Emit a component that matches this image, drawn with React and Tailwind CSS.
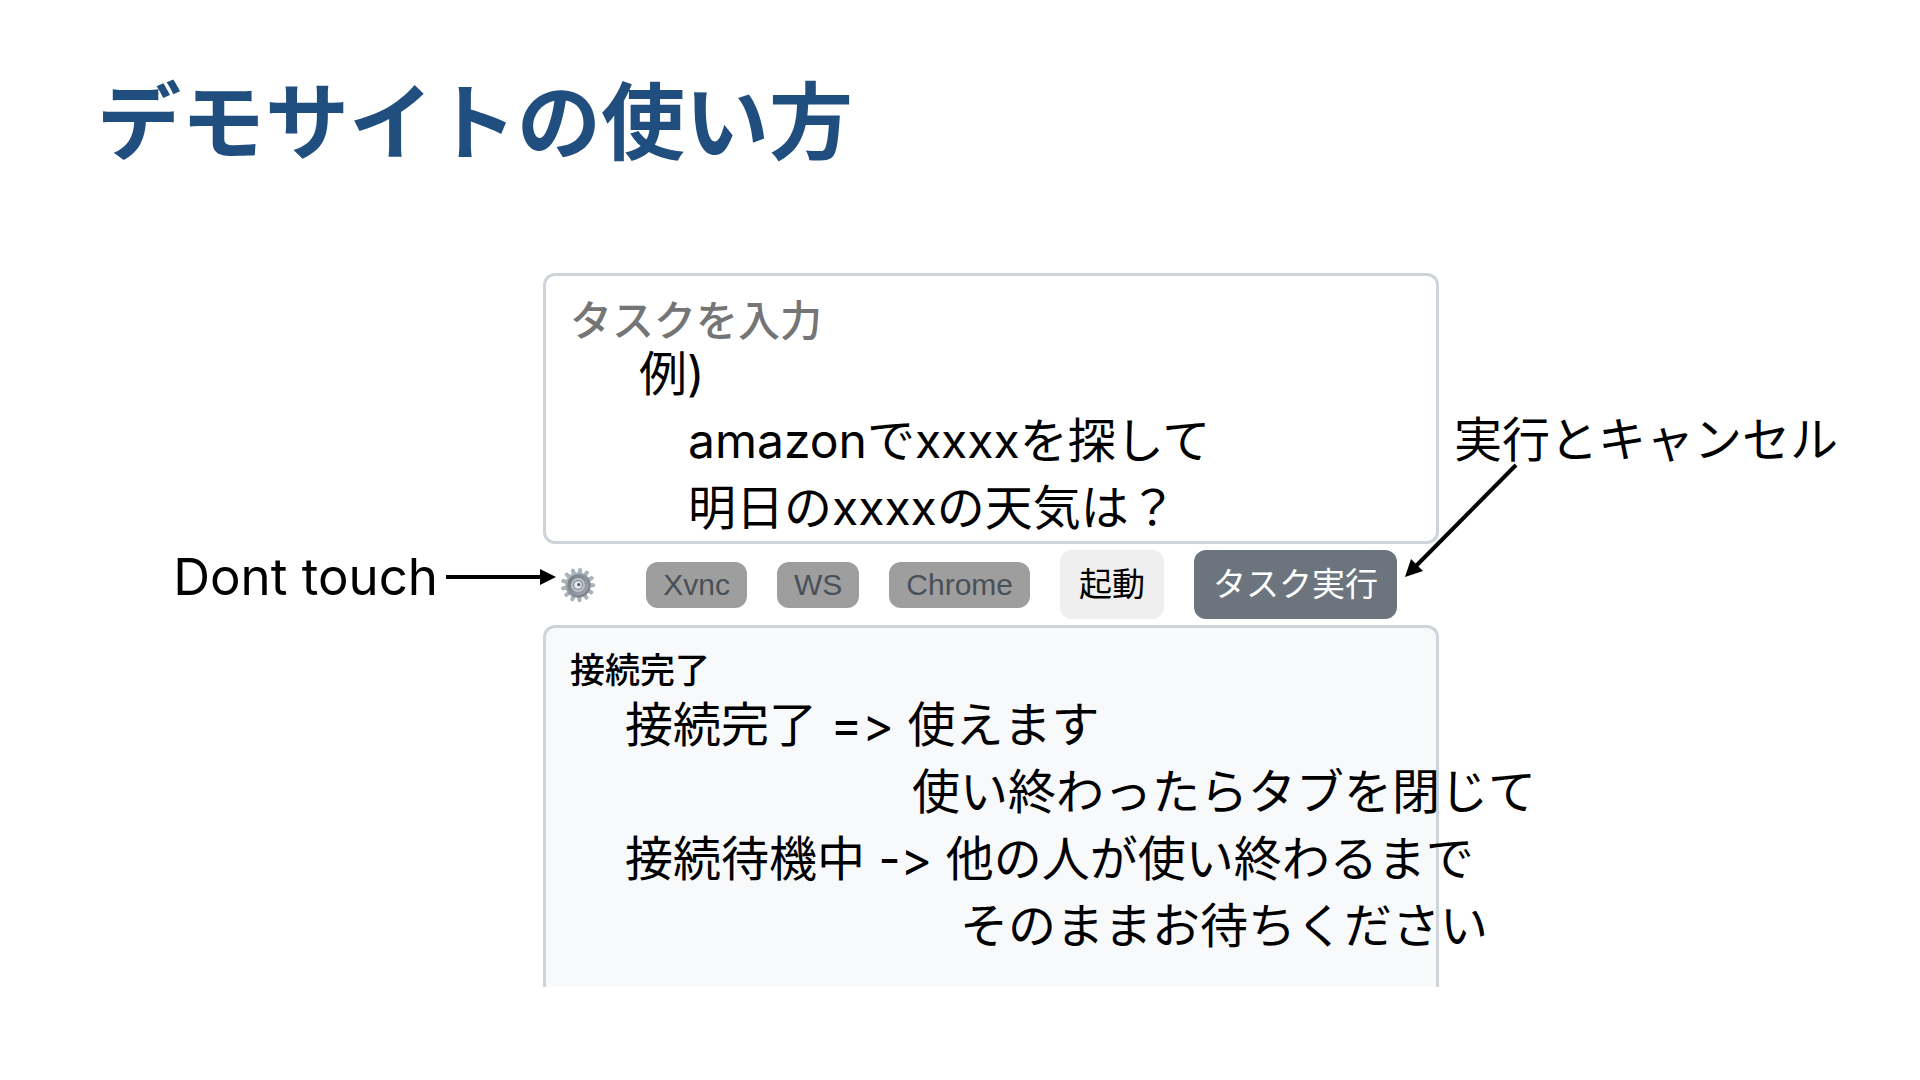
const noteBase =
  "font-['Inter','Noto_Sans_CJK_JP',sans-serif] [font-feature-settings:'calt'_0] leading-[67px] whitespace-nowrap text-black";
const note = `${noteBase} text-[48px]`;

const TEETH = Array.from({ length: 13 }, (_, i) => (i * 360) / 13);

function GearIcon() {
  return (
    <svg viewBox="0 0 36 36" className="size-9" aria-hidden="true">
      <defs>
        <linearGradient id="gearRim" x1="0" y1="0" x2="1" y2="1">
          <stop offset="0" stopColor="#b9c6d0" />
          <stop offset="0.5" stopColor="#8b949c" />
          <stop offset="1" stopColor="#6f757c" />
        </linearGradient>
        <linearGradient id="gearFace" x1="0" y1="0" x2="1" y2="1">
          <stop offset="0" stopColor="#70777e" />
          <stop offset="1" stopColor="#a3a9b0" />
        </linearGradient>
      </defs>
      {TEETH.map((angle) => (
        <path
          key={angle}
          d="M16 7 L16.5 1.6 Q18 0.4 19.5 1.6 L20 7 Z"
          fill="#a9b4bd"
          stroke="#8a939a"
          strokeWidth="0.4"
          transform={`rotate(${angle + 8} 18 18)`}
        />
      ))}
      <circle cx="18" cy="18" r="12.6" fill="url(#gearRim)" />
      <circle cx="18" cy="18" r="10.6" fill="url(#gearFace)" />
      <circle cx="18" cy="18" r="7" fill="#bcc4cb" />
      <circle cx="18" cy="18" r="5" fill="#858d94" />
      <circle cx="18" cy="18" r="3.8" fill="#e3e9ee" />
      <circle cx="18.8" cy="17.6" r="1.6" fill="#6a5f5c" />
    </svg>
  );
}

function Badge({ children }) {
  return (
    <span className="rounded-xl bg-[#9e9e9e] px-[17px] font-['Liberation_Sans',sans-serif] text-[30px] leading-[46px] text-[#495057]">
      {children}
    </span>
  );
}

export default function App() {
  return (
    <div className="min-h-screen overflow-x-hidden bg-white font-['Noto_Sans_CJK_JP',sans-serif]">
      <h1 className="px-[97px] pt-[67px] text-[84px] leading-[100px] font-bold text-[#1f4e7f]">
        デモサイトの使い方
      </h1>

      <main className="mt-[106px] grid grid-cols-[543fr_896fr_481fr]">
        <aside className="flex items-start justify-end pt-[270px]">
          <div className="-mr-[13px] flex items-center gap-2">
            <p className={`${noteBase} text-[51px]`}>Dont touch</p>
            <svg viewBox="0 0 110 20" className="h-5 w-[110px] shrink-0" aria-hidden="true">
              <path d="M0 10H96" stroke="#000" strokeWidth="4" />
              <path d="M94 2L110 10L94 18Z" fill="#000" />
            </svg>
          </div>
        </aside>

        <div className="min-w-0">
          <section className="grid rounded-xl border-3 border-[#ced4da]">
            <textarea
              aria-label="タスクを入力"
              placeholder="タスクを入力"
              className="col-start-1 row-start-1 resize-none bg-transparent px-6 pt-3 text-[42px] leading-[60px] font-medium outline-none placeholder:text-[#757575]"
            />
            <div className={`${note} pointer-events-none col-start-1 row-start-1 pt-16`}>
              <p className="pl-[93px]">例)</p>
              <p className="pl-[142px]">amazonでxxxxを探して</p>
              <p className="pl-[142px]">明日のxxxxの天気は？</p>
            </div>
          </section>

          <div className="flex items-center gap-[30px] py-1.5 pr-[42px] pl-[17px]">
            <button type="button" aria-label="設定" className="mr-auto">
              <GearIcon />
            </button>
            <Badge>Xvnc</Badge>
            <Badge>WS</Badge>
            <Badge>Chrome</Badge>
            <button type="button" className="rounded-xl bg-[#efefef] px-[19px] pb-1 text-[33px] leading-[65px] text-black">
              起動
            </button>
            <button type="button" className="rounded-xl bg-[#6c757d] px-[19px] pb-1 text-[33px] leading-[65px] text-white">
              タスク実行
            </button>
          </div>

          <section className="rounded-t-xl border-3 border-b-0 border-[#ced4da] bg-[#f8f9fb] pt-5 pb-7">
            <h2 className="mb-[3px] pl-6 text-[35px] leading-10 font-medium text-black">接続完了</h2>
            <div className={note}>
              <p className="pl-[79px]">接続完了 =&gt; 使えます</p>
              <p className="pl-[366px]">使い終わったらタブを閉じて</p>
              <p className="pl-[79px]">接続待機中 -&gt; 他の人が使い終わるまで</p>
              <p className="pl-[414px]">そのままお待ちください</p>
            </div>
          </section>
        </div>

        <aside className="relative pt-[133px] pl-[15px]">
          <p className={note}>実行とキャンセル</p>
          <svg viewBox="0 0 114 114" className="absolute top-[190px] -left-[34px] size-[114px]" aria-hidden="true">
            <path d="M111 2L10 104" stroke="#000" strokeWidth="4" />
            <path d="M0 114L6 96L18 108Z" fill="#000" />
          </svg>
        </aside>
      </main>
    </div>
  );
}
